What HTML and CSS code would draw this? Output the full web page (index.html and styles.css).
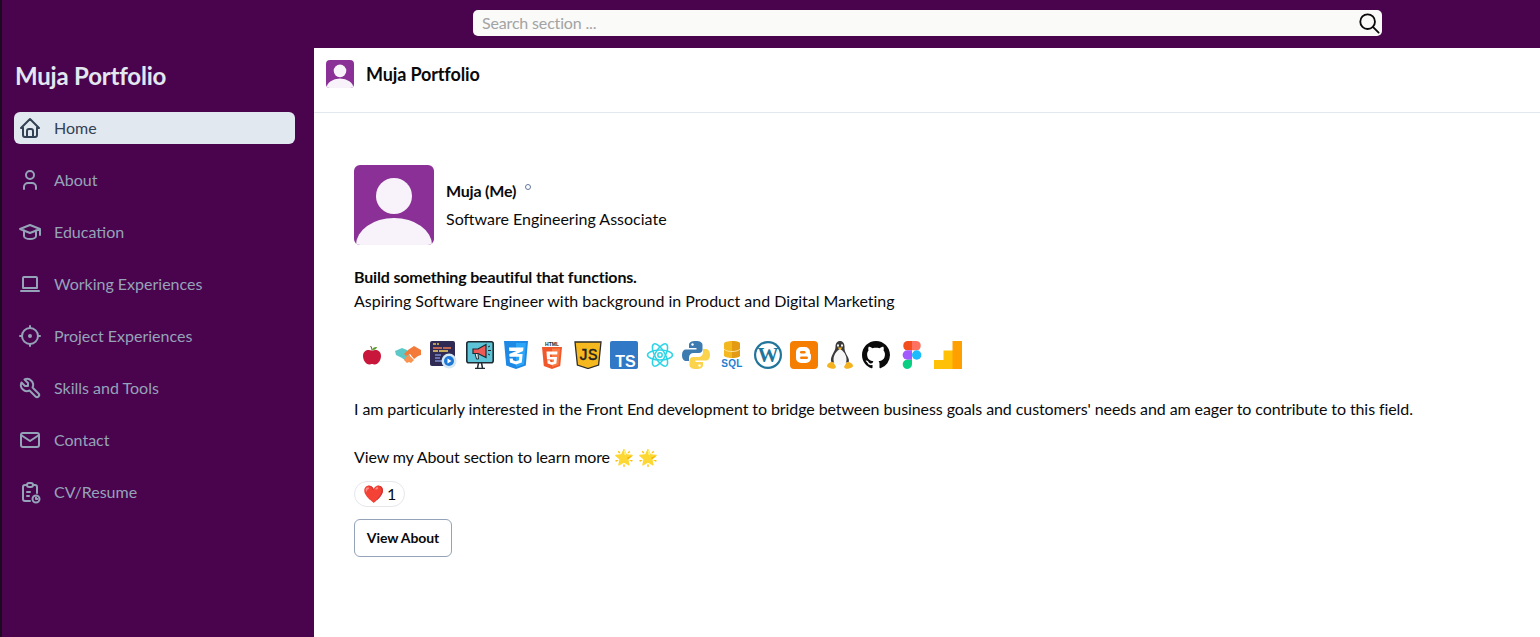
FILE: index.html
```html
<!DOCTYPE html>
<html lang="en">

<head>
    <meta charset="UTF-8">
    <title>Muja Portfolio</title>
    <link rel="stylesheet" href="styles.css">
</head>

<body>
    <div class="page">
        <header class="topbar">
            <div class="search">
                <input class="search-input" type="text" placeholder="Search section ...">
                <svg class="search-icon" viewBox="0 0 24 24" fill="none" stroke="#0a0a0a" stroke-width="2" stroke-linecap="round">
                    <circle cx="10.5" cy="10.5" r="8"/>
                    <path d="M16.5 16.5L22.5 22.5"/>
                </svg>
            </div>
        </header>

        <div class="layout">
            <aside class="sidebar">
                <h1 class="brand">Muja Portfolio</h1>
                <nav class="nav">
                    <a class="nav-item active">
                        <svg class="nav-icon" viewBox="0 0 24 24"><path d="M5 12H3l9-9 9 9h-2"/><path d="M5 12v7a2 2 0 0 0 2 2h10a2 2 0 0 0 2-2v-7"/><path d="M9 21v-6a2 2 0 0 1 2-2h2a2 2 0 0 1 2 2v6"/></svg>
                        <span class="nav-label">Home</span>
                    </a>
                    <a class="nav-item">
                        <svg class="nav-icon" viewBox="0 0 24 24"><circle cx="12" cy="7" r="4"/><path d="M6 21v-2a4 4 0 0 1 4-4h4a4 4 0 0 1 4 4v2"/></svg>
                        <span class="nav-label">About</span>
                    </a>
                    <a class="nav-item">
                        <svg class="nav-icon" viewBox="0 0 24 24"><path d="M22 9L12 5 2 9l10 4 10-4v6"/><path d="M6 10.6V16a6 3 0 0 0 12 0v-5.4"/></svg>
                        <span class="nav-label">Education</span>
                    </a>
                    <a class="nav-item">
                        <svg class="nav-icon" viewBox="0 0 24 24"><path d="M3 19h18"/><path d="M5 6a1 1 0 0 1 1-1h12a1 1 0 0 1 1 1v10H5z"/></svg>
                        <span class="nav-label">Working Experiences</span>
                    </a>
                    <a class="nav-item">
                        <svg class="nav-icon" viewBox="0 0 24 24"><circle cx="12" cy="12" r="1"/><circle cx="12" cy="12" r="8"/><path d="M12 2v2M12 20v2M20 12h2M2 12h2"/></svg>
                        <span class="nav-label">Project Experiences</span>
                    </a>
                    <a class="nav-item">
                        <svg class="nav-icon" viewBox="0 0 24 24"><path d="M7 10h3V7L6.500 3.500a6 6 0 0 1 8 8l6 6a2 2 0 0 1-3 3l-6-6a6 6 0 0 1-8-8L7 10"/></svg>
                        <span class="nav-label">Skills and Tools</span>
                    </a>
                    <a class="nav-item">
                        <svg class="nav-icon" viewBox="0 0 24 24"><rect x="3" y="5" width="18" height="14" rx="2"/><path d="M3 7l9 6 9-6"/></svg>
                        <span class="nav-label">Contact</span>
                    </a>
                    <a class="nav-item">
                        <svg class="nav-icon" viewBox="0 0 24 24"><path d="M9 5H7a2 2 0 0 0-2 2v12a2 2 0 0 0 2 2h5"/><path d="M15 5h2a2 2 0 0 1 2 2v6"/><rect x="9" y="3" width="6" height="4" rx="2"/><path d="M9 12h3M9 16h2"/><circle cx="18" cy="19" r="3.500"/><path d="M18 17.500V19h1.500"/></svg>
                        <span class="nav-label">CV/Resume</span>
                    </a>
                </nav>
            </aside>

            <main class="main">
                <div class="main-header">
                    <svg class="avatar-small" viewBox="0 0 80 80"><use href="#avatar"/></svg>
                    <h2 class="main-title">Muja Portfolio</h2>
                </div>

                <section class="post">
                    <div class="profile">
                        <svg class="avatar" viewBox="0 0 80 80">
                            <g id="avatar">
                                <rect width="80" height="80" fill="#8a3096"/>
                                <circle cx="40" cy="31" r="18" fill="#f8f3fa"/>
                                <path d="M2 80a38 27 0 0 1 76 0z" fill="#f8f3fa"/>
                            </g>
                        </svg>
                        <div class="profile-text">
                            <div class="profile-name">Muja (Me) <span class="status-dot"></span></div>
                            <div class="profile-role">Software Engineering Associate</div>
                        </div>
                    </div>

                    <p class="intro"><strong class="intro-lead">Build something beautiful that functions.</strong><br>
                        <span class="intro-sub">Aspiring Software Engineer with background in Product and Digital Marketing</span></p>

                    <div class="tech-row">
                        <!-- apple -->
                        <svg class="tech" viewBox="0 0 28 28">
                            <path d="M14 10c3-2 9-1 9 5 0 5-4 8.500-6 8.500-1.500 0-2-.5-3-.5s-1.500.5-3 .5c-2 0-6-3.500-6-8.500 0-6 6-7 9-5z" fill="#c8173a"/>
                            <path d="M14 10c0-2-.5-4-1.500-5" stroke="#6b4a1f" stroke-width="1" fill="none"/>
                            <path d="M14 9c.5-2.500 3-3.500 5-3-.5 2-2.500 3.500-5 3z" fill="#5aa02c"/>
                        </svg>
                        <!-- handshake -->
                        <svg class="tech" viewBox="0 0 28 28">
                            <path d="M1 10l7-3 5 2 3 6-4 5-4-3-6-3z" fill="#5cc8c8"/>
                            <path d="M27 9l-7-4-6 4-4 4 2 2 4-2 4 5 4-3 3-1z" fill="#f47a3a"/>
                            <path d="M10 19l3 3 2-1 2 1 3-3-5-5-3 2z" fill="#f9934f"/>
                        </svg>
                        <!-- dev window -->
                        <svg class="tech" viewBox="0 0 28 28">
                            <rect x="0" y="0" width="25" height="25" rx="2" fill="#2f2b55"/>
                            <path d="M3 3h3M7 3h2" stroke="#e6c34a" stroke-width="1.500"/>
                            <path d="M3 7h9M13 7h8" stroke="#ee7b52" stroke-width="1.500"/>
                            <path d="M3 10h5M9 10h9" stroke="#f4d35e" stroke-width="1.500"/>
                            <path d="M5 14h6M5 17h5M5 20h7" stroke="#7e8ac9" stroke-width="1.500"/>
                            <circle cx="19" cy="20" r="7.500" fill="#d5e8f4"/>
                            <circle cx="19" cy="20" r="5" fill="#1e78d8"/>
                            <path d="M17.500 17.500l4 2.500-4 2.500z" fill="#fff"/>
                        </svg>
                        <!-- marketing monitor -->
                        <svg class="tech" viewBox="0 0 28 28">
                            <rect x="0.800" y="0.800" width="26.400" height="21" rx="2" fill="#5cc4d6" stroke="#1f2b33" stroke-width="1.600"/>
                            <path d="M9 27.500h10M12.500 22l-1 5M15.500 22l1 5" stroke="#1f2b33" stroke-width="1.500"/>
                            <path d="M7 8h5l8-4.500v13L12 12.500H7z" fill="#ec5b56" stroke="#1f2b33" stroke-width="1.200"/>
                            <path d="M9 12.500l1.500 5.500h2L12 12.500z" fill="#f1efe8" stroke="#1f2b33" stroke-width="1"/>
                            <path d="M22 9.500h3M22 6l2-1M22 13l2 1" stroke="#1f2b33" stroke-width="1"/>
                        </svg>
                        <!-- css -->
                        <svg class="tech" viewBox="0 0 28 28">
                            <path d="M2 0h24l-2.200 24.500L14 28 4.200 24.500z" fill="#1e88e5"/>
                            <path d="M14 2v24l8-2.800L24 2z" fill="#2ea6f7"/>
                            <path d="M7 6.500h14.500l-.4 3.500-6.500 3h6l-.8 8.500L14 23.500l-6-2-.4-4h3.200l.2 1.800 3 .9 3-.9.3-3.500H7.500L7.200 13l7.300-3H7.300z" fill="#fff"/>
                        </svg>
                        <!-- html -->
                        <svg class="tech" viewBox="0 0 28 28">
                            <text x="14" y="4.500" class="tech-html">HTML</text>
                            <path d="M4 6h20l-1.800 19L14 28l-8.200-3z" fill="#f0582b"/>
                            <path d="M14 7.500V26l6.500-2.300L22 7.500z" fill="#f97b45"/>
                            <path d="M8.500 10.500h11l-.3 3h-7.400l.2 2.500h7l-.6 6.500-4.400 1.400-4.400-1.400-.3-3.300h2.700l.2 1.500 1.800.6 1.800-.6.2-2.200H9z" fill="#fff"/>
                        </svg>
                        <!-- js -->
                        <svg class="tech" viewBox="0 0 28 28">
                            <path d="M1 1h26l-2.400 23L14 27.500 3.400 24z" fill="#f5b81f" stroke="#2b2b2b" stroke-width="1.300"/>
                            <text x="14" y="19" class="tech-js">JS</text>
                        </svg>
                        <!-- ts -->
                        <svg class="tech" viewBox="0 0 28 28">
                            <rect width="28" height="28" rx="2" fill="#3178c6"/>
                            <text x="15.500" y="25.500" class="tech-ts">TS</text>
                        </svg>
                        <!-- react -->
                        <svg class="tech" viewBox="0 0 28 28" fill="none" stroke="#2dd4e6" stroke-width="1.500">
                            <ellipse cx="14" cy="14" rx="12.500" ry="5"/>
                            <ellipse cx="14" cy="14" rx="12.500" ry="5" transform="rotate(60 14 14)"/>
                            <ellipse cx="14" cy="14" rx="12.500" ry="5" transform="rotate(120 14 14)"/>
                            <circle cx="14" cy="14" r="2.200"/>
                        </svg>
                        <!-- python -->
                        <svg class="tech" viewBox="0 0 28 28">
                            <path d="M14 0c-5 0-7 1.500-7 4v3h7.500v1.500H4c-2.500 0-4 2-4 5.500s1.500 6 4 6h3v-3.500c0-2.500 2-4.500 4.500-4.500H17c2 0 3.500-1.500 3.500-3.500V4c0-2.500-2.500-4-6.500-4z" fill="#3d7ab0"/>
                            <path d="M14 28c5 0 7-1.500 7-4v-3h-7.500v-1.500H24c2.500 0 4-2 4-5.500s-1.500-6-4-6h-3v3.500c0 2.500-2 4.500-4.500 4.500H11c-2 0-3.500 1.500-3.500 3.500V24c0 2.500 2.500 4 6.500 4z" fill="#fcd34d"/>
                            <circle cx="10.500" cy="3.500" r="1.200" fill="#fff"/>
                            <circle cx="17.500" cy="24.500" r="1.200" fill="#fff"/>
                        </svg>
                        <!-- sql -->
                        <svg class="tech" viewBox="0 0 28 28">
                            <path d="M6 2.500C6 1 10 0 14 0s8 1 8 2.500v12c0 1.500-4 2.500-8 2.500s-8-1-8-2.500z" fill="#f3b71f"/>
                            <path d="M14 0c4 0 8 1 8 2.500v12c0 1.500-4 2.500-8 2.500z" fill="#e29b12"/>
                            <path d="M6 8c1 1.500 4 2.500 8 2.500S21 9.500 22 8" fill="none" stroke="#fbe39a" stroke-width="1"/>
                            <text x="14" y="26" class="tech-sql">SQL</text>
                        </svg>
                        <!-- wordpress -->
                        <svg class="tech" viewBox="0 0 28 28">
                            <circle cx="14" cy="14" r="14" fill="#21759b"/>
                            <circle cx="14" cy="14" r="11.800" fill="#fff"/>
                            <text x="14" y="21" class="tech-wp">W</text>
                        </svg>
                        <!-- blogger -->
                        <svg class="tech" viewBox="0 0 28 28">
                            <rect width="28" height="28" rx="4" fill="#f57d00"/>
                            <path d="M11 6h4a5 5 0 0 1 5 5v1a2 2 0 0 0 1 1.500V17a5 5 0 0 1-5 5h-5a5 5 0 0 1-5-5v-6a5 5 0 0 1 5-5z" fill="#fff"/>
                            <rect x="10" y="10" width="5.500" height="2.500" rx="1.200" fill="#f57d00"/>
                            <rect x="10" y="15.500" width="8" height="2.500" rx="1.200" fill="#f57d00"/>
                        </svg>
                        <!-- linux -->
                        <svg class="tech" viewBox="0 0 28 28">
                            <path d="M14 0c-3 0-4.500 2.500-4.500 5.500 0 3-1 4-2.500 7-1.500 3-3 6-1.500 9l17 0c1.500-3-1-6-2.500-9-1.500-3-1.500-4-1.500-7C18.500 2.500 17 0 14 0z" fill="#3a3a3a"/>
                            <path d="M14 8c-3.500 2-6.500 6-6.500 10.500S10 24 14 24s6.500-1 6.500-5.500S17.500 10 14 8z" fill="#f7f7f7"/>
                            <ellipse cx="12" cy="4.500" rx="1" ry="1.300" fill="#fff"/>
                            <ellipse cx="16" cy="4.500" rx="1" ry="1.300" fill="#fff"/>
                            <path d="M11.500 6.500h5L14 9z" fill="#f5b21f"/>
                            <path d="M1 25c0-2 3-4 5-4 1 0 2 1 3 3l1 2c-1 2-3 2-5 1.500S1 26 1 25z" fill="#f5b21f"/>
                            <path d="M27 25c0-2-3-4-5-4-1 0-2 1-3 3l-1 2c1 2 3 2 5 1.500s4-1.500 4-2.500z" fill="#f5b21f"/>
                        </svg>
                        <!-- github -->
                        <svg class="tech" viewBox="0 0 16 16">
                            <path fill="#0a0a0a" d="M8 0C3.580 0 0 3.580 0 8c0 3.540 2.290 6.530 5.470 7.590.4.07.55-.17.55-.38 0-.19-.01-.82-.01-1.490-2.010.37-2.530-.49-2.690-.94-.09-.23-.48-.94-.82-1.130-.28-.15-.68-.52-.01-.53.63-.01 1.080.58 1.230.82.72 1.210 1.870.87 2.330.66.07-.52.28-.87.51-1.070-1.780-.2-3.640-.89-3.640-3.950 0-.87.31-1.590.82-2.150-.08-.2-.36-1.020.08-2.120 0 0 .67-.21 2.200.82.64-.18 1.320-.27 2-.27.68 0 1.360.09 2 .27 1.530-1.040 2.200-.82 2.200-.82.44 1.100.16 1.920.08 2.120.51.56.82 1.270.82 2.150 0 3.070-1.870 3.750-3.650 3.950.29.25.54.73.54 1.480 0 1.070-.01 1.930-.01 2.200 0 .21.15.46.55.38A8.013 8.013 0 0 0 16 8c0-4.420-3.580-8-8-8z"/>
                        </svg>
                        <!-- figma -->
                        <svg class="tech" viewBox="0 0 28 28">
                            <path d="M14 0H9.300a4.700 4.700 0 0 0 0 9.300H14z" fill="#f24e1e"/>
                            <path d="M14 0h4.700a4.700 4.700 0 0 1 0 9.300H14z" fill="#ff7262"/>
                            <path d="M14 9.300H9.300a4.700 4.700 0 0 0 0 9.400H14z" fill="#a259ff"/>
                            <circle cx="18.700" cy="14" r="4.700" fill="#1abcfe"/>
                            <path d="M14 18.700H9.300A4.650 4.650 0 1 0 14 23.300z" fill="#0acf83"/>
                        </svg>
                        <!-- analytics -->
                        <svg class="tech" viewBox="0 0 28 28">
                            <rect x="0" y="19" width="10" height="9" fill="#ffc107"/>
                            <rect x="9.500" y="9.500" width="9.500" height="18.500" fill="#ffc107"/>
                            <rect x="18.500" y="0" width="9.500" height="28" fill="#ffa000"/>
                        </svg>
                    </div>

                    <p class="body-text body-long">I am particularly interested in the Front End development to bridge between business goals and customers' needs and am eager to contribute to this field.</p>
                    <p class="body-text body-more">View my About section to learn more 🌟 🌟</p>

                    <div class="reaction"><span class="reaction-emoji">❤️</span> 1</div>
                    <button class="view-btn"><span class="view-btn-label">View About</span></button>
                </section>
            </main>
        </div>
    </div>
</body>

</html>
```

FILE: styles.css
```css
* {
    box-sizing: border-box;
}

html,
body {
    height: 100%;
}

body {
    margin: 0;
    font-family: 'Lato', sans-serif;
    color: #0a0a0a;
    background-color: #fff;
    overflow: hidden;
}

.page {
    height: 100%;
    display: flex;
    flex-direction: column;
    border-left: 2px solid #1c0a20;
    /* thin dark strip on the left edge */
}

.topbar {
    height: 48px;
    flex-shrink: 0;
    background-color: #4a044e;
    padding: 10px 0 0 471px;
}

.search {
    width: 909px;
    height: 26px;
    display: flex;
    align-items: center;
    background-color: #fafaf9;
    border-radius: 5px;
    padding: 0 2px 0 9px;
}

.search-input {
    flex: 1;
    border: none;
    outline: none;
    background: transparent;
    font-family: 'Lato', sans-serif;
    font-size: 16px;
    letter-spacing: -0.16px;
    padding: 0 0 2px;
}

.search-input::placeholder {
    color: #a3a3a3;
    opacity: 1;
}

.search-icon {
    width: 22px;
    height: 22px;
}

.layout {
    flex: 1;
    display: flex;
    min-height: 0;
}

.sidebar {
    width: 312px;
    flex-shrink: 0;
    background-color: #4a044e;
    padding: 0 19px 0 12px;
}

.brand {
    margin: 0 0 0 1px;
    padding: 13px 0 21px;
    font-size: 24px;
    line-height: 30px;
    font-weight: 700;
    letter-spacing: -0.2px;
    color: #e2e8f0;
}

.nav {
    display: flex;
    flex-direction: column;
    gap: 20px;
}

.nav-item {
    height: 32px;
    display: flex;
    align-items: center;
    gap: 12px;
    padding-left: 4px;
    border-radius: 6px;
    font-size: 16px;
    color: #94a3b8;
}

.nav-label {
    margin-top: -2px;
}

.nav-item.active {
    background-color: #e2e8f0;
    color: #334155;
}

.nav-icon {
    width: 24px;
    height: 24px;
    flex-shrink: 0;
    fill: none;
    stroke: currentColor;
    stroke-width: 2;
    stroke-linecap: round;
    stroke-linejoin: round;
}

.main {
    flex: 1;
    min-width: 0;
    background-color: #fff;
}

.main-header {
    height: 65px;
    display: flex;
    align-items: flex-start;
    gap: 12px;
    padding: 12px 12px 0;
    border-bottom: 1px solid #e2e8f0;
}

.avatar-small {
    width: 28px;
    height: 28px;
    border-radius: 4px;
}

.main-title {
    margin: 2px 0 0;
    font-size: 18px;
    line-height: 24px;
    font-weight: 700;
    letter-spacing: -0.13px;
}

.post {
    padding: 52px 40px 0;
    font-size: 16px;
    line-height: 24px;
}

.profile {
    display: flex;
    align-items: center;
    gap: 12px;
}

.avatar {
    width: 80px;
    height: 80px;
    border-radius: 6px;
}

.profile-text {
    margin-top: 4px;
}

.profile-name {
    font-weight: 700;
    letter-spacing: -0.2px;
    margin-bottom: 4px;
    margin-top: -4px;
}

.status-dot {
    display: inline-block;
    width: 6px;
    height: 6px;
    margin: 0 0 7px 5px;
    border: 1px solid #64789f;
    border-radius: 50%;
}

.intro {
    margin: 20px 0 0;
}

.intro-lead {
    letter-spacing: -0.17px;
}

.intro-sub {
    letter-spacing: -0.03px;
}

.tech-row {
    display: flex;
    margin-top: 28px;
    height: 28px;
}

.tech {
    width: 28px;
    height: 28px;
    margin: 0 4px;
    flex-shrink: 0;
    overflow: hidden;
}

.tech-html {
    font: bold 5px 'Liberation Sans', sans-serif;
    text-anchor: middle;
    fill: #222;
}

.tech-js {
    font: 16px 'Liberation Mono', monospace;
    text-anchor: middle;
    fill: #222;
    stroke: #222;
    stroke-width: 0.4px;
}

.tech-ts {
    font: bold 16px 'Liberation Sans', sans-serif;
    text-anchor: middle;
    fill: #fff;
}

.tech-sql {
    font: bold 10px 'Liberation Sans', sans-serif;
    letter-spacing: 0.3px;
    text-anchor: middle;
    fill: #1e7fd0;
}

.tech-wp {
    font: bold 21px 'Liberation Serif', serif;
    text-anchor: middle;
    fill: #21759b;
}

.body-text {
    margin: 28px 0 0;
}

.body-long {
    letter-spacing: -0.085px;
}

.body-more {
    letter-spacing: -0.12px;
}

.body-text + .body-text {
    margin-top: 24px;
}

.reaction {
    width: 51px;
    height: 26px;
    margin-top: 12px;
    display: flex;
    align-items: center;
    gap: 3px;
    padding-left: 8px;
    border: 1px solid #e5e7eb;
    border-radius: 13px;
    font-size: 16px;
}

.reaction-emoji {
    font-size: 17px;
}

.view-btn {
    display: block;
    width: 98px;
    height: 38px;
    margin-top: 12px;
    background-color: #fff;
    border: 1px solid #94a3b8;
    border-radius: 6px;
    font-family: 'Lato', sans-serif;
    font-size: 14px;
    font-weight: 700;
    color: #0a0a0a;
    padding: 0 0 2px;
}

.view-btn-label {
    letter-spacing: -0.1px;
}
```
